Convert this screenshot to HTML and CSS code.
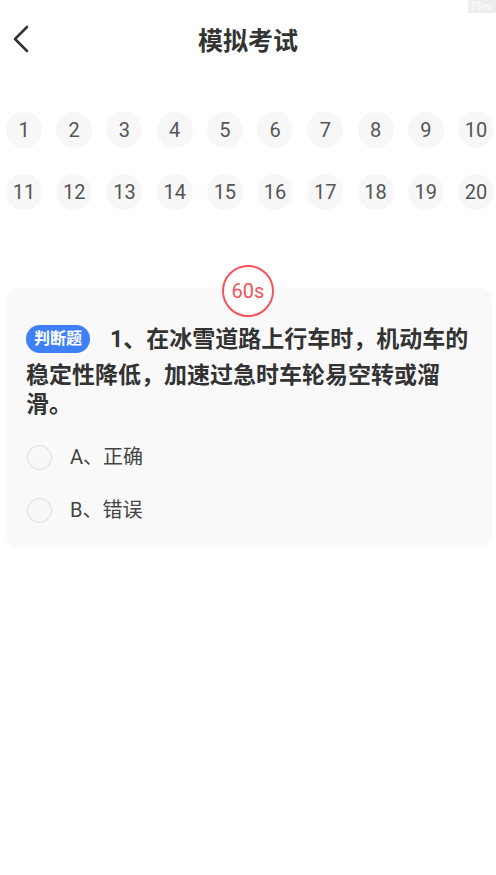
FILE: index.html
```html
<!DOCTYPE html>
<html lang="zh-CN">
<head>
<meta charset="utf-8">
<title>模拟考试</title>
<link rel="stylesheet" href="styles.css">
</head>
<body>
<div class="page">
  <div class="corner-badge">75nv</div>
  <header class="header">
    <button class="back" aria-label="返回">
      <svg width="18" height="28" viewBox="0 0 18 28"><path d="M15 2 L3 14 L15 26" fill="none" stroke="#333" stroke-width="2.6" stroke-linecap="round" stroke-linejoin="round"/></svg>
    </button>
    <h1 class="title">模拟考试</h1>
  </header>

  <section class="grid">
    <span class="num">1</span><span class="num">2</span><span class="num">3</span><span class="num">4</span><span class="num">5</span>
    <span class="num">6</span><span class="num">7</span><span class="num">8</span><span class="num">9</span><span class="num">10</span>
    <span class="num">11</span><span class="num">12</span><span class="num">13</span><span class="num">14</span><span class="num">15</span>
    <span class="num">16</span><span class="num">17</span><span class="num">18</span><span class="num">19</span><span class="num">20</span>
  </section>

  <section class="card">
    <div class="timer">60s</div>
    <p class="question"><span class="tag">判断题</span>1、在冰雪道路上行车时，机动车的稳定性降低，加速过急时车轮易空转或溜滑。</p>
    <div class="options">
      <div class="option"><span class="radio"></span><span class="opt-text">A、正确</span></div>
      <div class="option"><span class="radio"></span><span class="opt-text">B、错误</span></div>
    </div>
  </section>
</div>
</body>
</html>
```

FILE: styles.css
```css
* { box-sizing: border-box; }
html, body { margin: 0; padding: 0; background: #fff; }
body {
  font-family: "Roboto", "Noto Sans CJK SC", "Noto Sans", sans-serif;
  color: #333;
}
.page { position: relative; width: 496px; min-height: 875px; }

.corner-badge {
  position: absolute;
  top: 0;
  right: 0;
  width: 28px;
  height: 13px;
  background: #ededed;
  color: #fff;
  font-size: 10px;
  line-height: 13px;
  padding-left: 2px;
  overflow: hidden;
  white-space: nowrap;
}

.header {
  height: 78px;
  display: flex;
  align-items: center;
  justify-content: center;
  position: relative;
}
.back {
  position: absolute;
  left: 10px;
  top: 24px;
  border: 0;
  background: none;
  padding: 0;
  width: 22px;
  height: 30px;
  display: flex;
  align-items: center;
  justify-content: center;
}
.title {
  margin: 0;
  font-size: 25px;
  font-weight: 700;
  color: #333;
  font-family: "Noto Sans CJK SC", sans-serif;
}

.grid {
  margin-top: 34px;
  padding: 0 2px 0 6px;
  display: grid;
  grid-template-columns: repeat(10, 36px);
  justify-content: space-between;
  row-gap: 25.5px;
}
.num {
  width: 36px;
  height: 36px;
  border-radius: 50%;
  background: #f7f7f7;
  color: #555;
  font-size: 20px;
  display: flex;
  align-items: center;
  justify-content: center;
}

.card {
  position: relative;
  margin: 78px 4px 0 6px;
  background: #f9f9f9;
  border-radius: 12px;
  padding: 37px 20px 24px;
}
.timer {
  position: absolute;
  top: -23px;
  left: 50%;
  margin-left: -27px;
  width: 52px;
  height: 52px;
  border: 2px solid #f5525a;
  border-radius: 50%;
  background: #fff;
  color: #f5525a;
  font-size: 20px;
  display: flex;
  align-items: center;
  justify-content: center;
}

.question {
  margin: 0;
  font-size: 23px;
  line-height: 29px;
  font-weight: 700;
  color: #333;
}
.tag {
  display: inline-block;
  vertical-align: top;
  height: 28px;
  line-height: 28px;
  padding: 0 8px;
  margin: 0 20px 8px 0;
  border-radius: 14px;
  background: #3f7ff7;
  color: #fff;
  font-size: 16px;
  font-weight: 700;
}

.options {
  margin-top: 26px;
  display: flex;
  flex-direction: column;
  gap: 28px;
}
.option {
  display: flex;
  align-items: center;
  gap: 18px;
  padding-left: 1px;
}
.radio {
  width: 25px;
  height: 25px;
  border-radius: 50%;
  border: 1px solid #dedede;
  background: #f8f8f8;
}
.opt-text {
  font-size: 20px;
  color: #444;
  line-height: 25px;
}
```
